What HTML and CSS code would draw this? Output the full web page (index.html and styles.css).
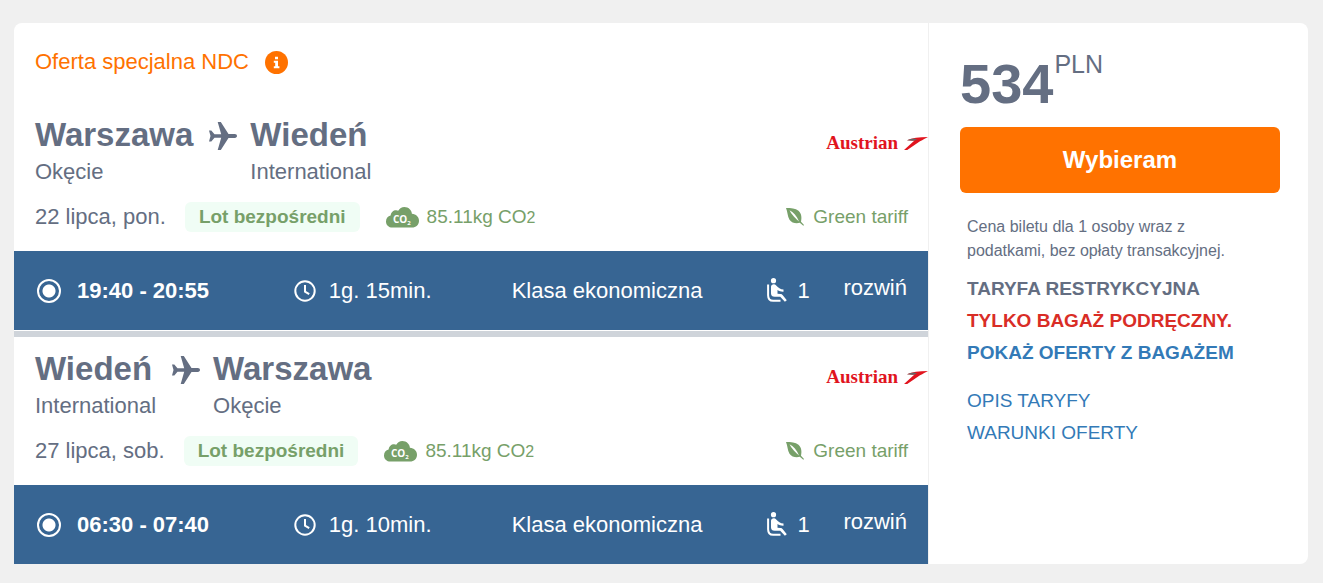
FILE: index.html
```html
<!DOCTYPE html>
<html lang="pl">
<head>
    <meta charset="UTF-8">
    <meta name="viewport" content="width=device-width, initial-scale=1.0">
    <title>Warszawa - Wiedeń</title>
    <link rel="stylesheet" href="styles.css">
</head>
<body>
    <svg width="0" height="0" class="sprite" aria-hidden="true">
        <symbol id="plane" viewBox="0 0 28 28">
            <path d="M0 8.500h2.300l3.200 3.800h6.700L8.700 0h3.100l7.700 12.100h6.300c1.400 0 2.200.8 2.200 1.900s-.8 1.900-2.200 1.900h-6.300L11.800 28H8.700l3.500-12.300H5.500l-3.200 3.800H0L1.500 14z"/>
        </symbol>
        <symbol id="leaf" viewBox="0 0 18 18">
            <path d="M0 0c5 0 9.500.2 12.500 2.700 3.300 2.800 3.300 7.400 2.500 11l3 3.300-.7.800-3.500-3c-3.800.9-8.100.2-10.300-3.100C1.400 8.500 1.700 3.800 0 0z"/>
            <path d="M3.500 2.200c3.800 1.900 7.400 6 9.600 11.300C9.800 10.600 5.600 6.400 3.500 2.200z" fill="#fff"/>
        </symbol>
        <symbol id="clock" viewBox="0 0 22 22">
            <circle cx="11" cy="11" r="9.700"/>
            <path d="M11 5v6.600l4.200 2.600"/>
        </symbol>
        <symbol id="seat" viewBox="0 0 20 25">
            <circle cx="6.500" cy="2.700" r="2.600"/>
            <path d="M4 8.700C4 6.300 7.500 5.400 9.200 7.400c2 2.400 4.200 3.900 7.300 4v2.300c-2.300.1-4.300-.5-6-1.600v3.600l2.800.4c1.100 0 1.800.3 2.500 1.200l4 4.900-1.900 1.600-4.700-5H7.700C5.300 18.800 4 17.500 4 15.500z"/>
            <path d="M1.100 6.500v10.700c0 3.500 1.700 5.600 5 5.600h7.400" class="seat-frame"/>
        </symbol>
        <symbol id="arrow" viewBox="0 0 24 13">
            <path d="M24 0C15 0 8 1.200 3 3.200c2.800.3 5.200.5 7.500.4L0 13h3.200L16 4.300C19 2.700 21.500 1.500 24 0z"/>
            <path d="M3 3.200c2.500-.9 5-1.400 7.500-1.600l2.500 1-2.500 1C8 3.700 5.500 3.500 3 3.200z" fill="#666"/>
        </symbol>
    </svg>

    <div class="offer">
        <div class="flights">
            <div class="special">
                <span>Oferta specjalna NDC</span>
                <svg width="23" height="23" viewBox="0 0 23 23" class="info">
                    <circle cx="11.500" cy="11.500" r="11.500"/>
                    <path d="M10 5.800h3v2.500h-3zM8.800 9.800H13v5.400h1.400v2H8.800v-2h1.400v-3.400H8.800z" fill="#fff"/>
                </svg>
            </div>

            <section class="segment">
                <div class="route">
                    <div class="place">
                        <h2>Warszawa</h2>
                        <span>Okęcie</span>
                    </div>
                    <svg width="28" height="28" class="plane"><use href="#plane"/></svg>
                    <div class="place">
                        <h2>Wiedeń</h2>
                        <span>International</span>
                    </div>
                    <div class="airline">Austrian <svg width="24" height="13"><use href="#arrow"/></svg></div>
                </div>
                <div class="details">
                    <span class="date">22 lipca, pon.</span>
                    <span class="direct">Lot bezpośredni</span>
                    <span class="co2">
                        <svg width="33" height="21" viewBox="0 0 33 21">
                            <path d="M6.500 20.500C2.600 20.500 0 17.800 0 14.400c0-3 1.900-5.200 4.600-5.900C5 5.100 7.600 3 10.300 3.200c.7 0 1.300.2 1.900.5C13.600 1.400 15.700 0 18.400 0c4 0 7.200 2.800 7.500 6.800 4.200.2 7.100 3.200 7.100 6.900 0 4-3 6.800-7 6.800z"/>
                            <text x="7" y="16" class="cloud-text">CO<tspan dy="2" class="cloud-sub">2</tspan></text>
                        </svg>
                        <span>85.11kg CO<small>2</small></span>
                    </span>
                    <span class="tariff"><svg width="18" height="18"><use href="#leaf"/></svg>Green tariff</span>
                </div>
                <div class="bar">
                    <label class="time"><input type="radio" name="outbound" checked>19:40 - 20:55</label>
                    <span class="duration"><svg width="22" height="22" class="clock"><use href="#clock"/></svg>1g. 15min.</span>
                    <span>Klasa ekonomiczna</span>
                    <span class="seats"><svg width="20" height="25"><use href="#seat"/></svg>1</span>
                    <button type="button" class="expand">rozwiń</button>
                </div>
            </section>

            <section class="segment">
                <div class="route">
                    <div class="place">
                        <h2>Wiedeń</h2>
                        <span>International</span>
                    </div>
                    <svg width="28" height="28" class="plane"><use href="#plane"/></svg>
                    <div class="place">
                        <h2>Warszawa</h2>
                        <span>Okęcie</span>
                    </div>
                    <div class="airline">Austrian <svg width="24" height="13"><use href="#arrow"/></svg></div>
                </div>
                <div class="details">
                    <span class="date">27 lipca, sob.</span>
                    <span class="direct">Lot bezpośredni</span>
                    <span class="co2">
                        <svg width="33" height="21" viewBox="0 0 33 21">
                            <path d="M6.500 20.500C2.600 20.500 0 17.800 0 14.400c0-3 1.900-5.200 4.600-5.900C5 5.100 7.600 3 10.300 3.200c.7 0 1.300.2 1.900.5C13.600 1.400 15.700 0 18.400 0c4 0 7.200 2.800 7.500 6.800 4.200.2 7.100 3.200 7.100 6.900 0 4-3 6.800-7 6.800z"/>
                            <text x="7" y="16" class="cloud-text">CO<tspan dy="2" class="cloud-sub">2</tspan></text>
                        </svg>
                        <span>85.11kg CO<small>2</small></span>
                    </span>
                    <span class="tariff"><svg width="18" height="18"><use href="#leaf"/></svg>Green tariff</span>
                </div>
                <div class="bar">
                    <label class="time"><input type="radio" name="inbound" checked>06:30 - 07:40</label>
                    <span class="duration"><svg width="22" height="22" class="clock"><use href="#clock"/></svg>1g. 10min.</span>
                    <span>Klasa ekonomiczna</span>
                    <span class="seats"><svg width="20" height="25"><use href="#seat"/></svg>1</span>
                    <button type="button" class="expand">rozwiń</button>
                </div>
            </section>
        </div>

        <aside class="summary">
            <div class="price"><strong>534</strong><span>PLN</span></div>
            <button type="button" class="choose">Wybieram</button>
            <div class="terms">
                <p>Cena biletu dla 1 osoby wraz z podatkami, bez opłaty transakcyjnej.</p>
                <ul class="fare">
                    <li>TARYFA RESTRYKCYJNA</li>
                    <li class="warning">TYLKO BAGAŻ PODRĘCZNY.</li>
                    <li><a href="#">POKAŻ OFERTY Z BAGAŻEM</a></li>
                </ul>
                <ul class="links">
                    <li><a href="#">OPIS TARYFY</a></li>
                    <li><a href="#">WARUNKI OFERTY</a></li>
                </ul>
            </div>
        </aside>
    </div>
</body>
</html>
```
FILE: styles.css
```css
* {
    box-sizing: border-box;
}
body {
    font-family: "Liberation Sans", Arial, sans-serif;
    font-size: 22px;
    color: #646e82;
    background: #f0f0f0;
    margin: 0;
    padding: 23px 15px 18px 14px;
}
h2, p, ul {
    margin: 0;
    padding: 0;
}
li {
    list-style: none;
}
a {
    color: #337ab7;
    text-decoration: none;
}
svg {
    flex: none;
    fill: currentColor;
}
.sprite {
    position: absolute;
}
.offer {
    display: grid;
    grid-template-columns: 1fr 380px;
    background: #fff;
    border-radius: 8px;
}

/* flights */
.special {
    display: flex;
    align-items: center;
    gap: 16px;
    height: 80px;
    padding: 0 21px 2px;
    color: #ff7200;
}
.segment + .segment {
    margin-top: 1px;
    border-top: 6px solid #cfd4da;
}
.route {
    display: flex;
    padding: 12px 0 0 21px;
}
.place h2 {
    font-size: 33px;
    line-height: 40px;
}
.place span {
    display: block;
    line-height: 34px;
}
.plane {
    margin: 7px 13px 0 16px;
}
.airline {
    display: flex;
    align-items: center;
    align-self: flex-start;
    gap: 6px;
    height: 56px;
    margin-left: auto;
    font: bold 19px "Liberation Serif", serif;
    color: #e1141e;
}
.details {
    display: flex;
    align-items: center;
    padding: 11px 20px 17px 21px;
    line-height: 34px;
}
.direct {
    margin: 0 26px 0 19px;
    padding: 0 14px;
    font-size: 19px;
    font-weight: bold;
    line-height: 30px;
    color: #77a069;
    background: #f0fdf5;
    border-radius: 6px;
}
.co2 {
    display: flex;
    align-items: center;
    gap: 8px;
    font-size: 19px;
    color: #77a069;
}
.co2 small {
    font-size: 16px;
    line-height: 1;
}
.cloud-text {
    font: bold 10px "Open Sans", sans-serif;
    fill: #fff;
}
.cloud-sub {
    font-size: 6px;
}
.tariff {
    display: flex;
    align-items: center;
    gap: 9px;
    margin-left: auto;
    font-size: 19px;
    color: #77a069;
}
.bar {
    display: grid;
    grid-template-columns: 257fr 218fr 256fr 76fr 63fr;
    align-items: center;
    height: 79px;
    padding: 0 21px 0 23px;
    color: #fff;
    background: #376593;
}
.time, .duration, .seats {
    display: flex;
    align-items: center;
}
.time {
    gap: 16px;
    font-weight: bold;
}
.time input {
    appearance: none;
    width: 24px;
    height: 24px;
    margin: 0;
    border: 2px solid #fff;
    border-radius: 50%;
    background: radial-gradient(circle, #fff 6px, transparent 7px);
}
.duration {
    gap: 13px;
}
.clock {
    fill: none;
    stroke: #fff;
    stroke-width: 2;
}
.seats {
    gap: 10px;
}
.seat-frame {
    fill: none;
    stroke: #fff;
    stroke-width: 2;
}
.expand {
    padding: 0 0 5px;
    font: inherit;
    color: inherit;
    background: none;
    border: 0;
    cursor: pointer;
}

/* price and terms */
.summary {
    padding: 28px 28px 0 31px;
    border-left: 1px solid #f0f0f0;
}
.price {
    display: flex;
    gap: 1px;
    height: 76px;
}
.price strong {
    font-size: 56px;
    line-height: 66px;
}
.price span {
    font-size: 25px;
    line-height: 26px;
}
.choose {
    width: 100%;
    height: 66px;
    font: bold 24px "Liberation Sans", Arial, sans-serif;
    color: #fff;
    background: #ff7200;
    border: 0;
    border-radius: 6px;
    cursor: pointer;
}
.terms {
    padding: 22px 28px 22px 7px;
    font-size: 19px;
    line-height: 32px;
}
.terms p {
    font-size: 16px;
    line-height: 24px;
}
.fare {
    margin: 10px 0 16px;
    font-weight: bold;
}
.warning {
    color: #d92d26;
}
```
